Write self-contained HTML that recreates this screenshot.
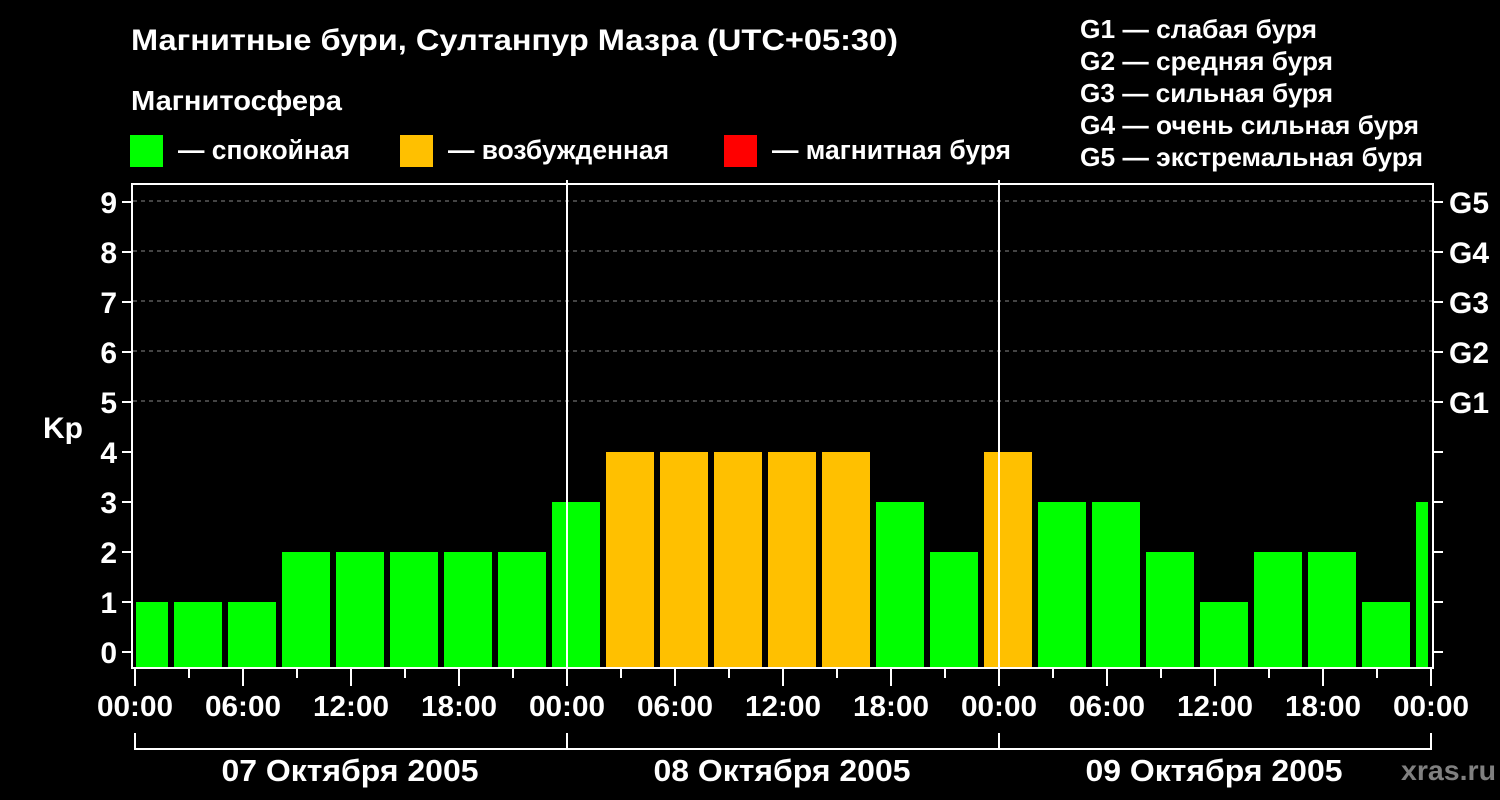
<!DOCTYPE html>
<html><head><meta charset="utf-8"><style>
html,body{margin:0;padding:0;background:#000;width:1500px;height:800px;overflow:hidden}
svg{display:block}
text{font-family:"Liberation Sans",Arial,sans-serif;font-weight:bold;fill:#fff}
</style></head><body>
<svg width="1500" height="800" viewBox="0 0 1500 800" xmlns="http://www.w3.org/2000/svg">
<rect width="1500" height="800" fill="#000"/>
<text x="131" y="50" font-size="30" textLength="767" lengthAdjust="spacingAndGlyphs">Магнитные бури, Султанпур Мазра (UTC+05:30)</text>
<text x="131" y="110" font-size="28" textLength="211" lengthAdjust="spacingAndGlyphs">Магнитосфера</text>
<rect x="130" y="135" width="33" height="32" fill="#00ff00"/>
<text x="178" y="159" font-size="27" textLength="172" lengthAdjust="spacingAndGlyphs">— спокойная</text>
<rect x="400" y="135" width="33" height="32" fill="#ffc000"/>
<text x="448" y="159" font-size="27" textLength="221" lengthAdjust="spacingAndGlyphs">— возбужденная</text>
<rect x="724" y="135" width="33" height="32" fill="#ff0000"/>
<text x="772" y="159" font-size="27" textLength="239" lengthAdjust="spacingAndGlyphs">— магнитная буря</text>
<g font-size="26">
<text x="1080" y="38" textLength="237" lengthAdjust="spacingAndGlyphs">G1 — слабая буря</text>
<text x="1080" y="70" textLength="253" lengthAdjust="spacingAndGlyphs">G2 — средняя буря</text>
<text x="1080" y="102" textLength="253" lengthAdjust="spacingAndGlyphs">G3 — сильная буря</text>
<text x="1080" y="134" textLength="339" lengthAdjust="spacingAndGlyphs">G4 — очень сильная буря</text>
<text x="1080" y="166" textLength="343" lengthAdjust="spacingAndGlyphs">G5 — экстремальная буря</text>
</g>
<g stroke="#888" stroke-width="1" stroke-dasharray="4 4">
<line x1="133" y1="201" x2="1432" y2="201"/>
<line x1="133" y1="251" x2="1432" y2="251"/>
<line x1="133" y1="301" x2="1432" y2="301"/>
<line x1="133" y1="351" x2="1432" y2="351"/>
<line x1="133" y1="401" x2="1432" y2="401"/>
</g>
<g stroke="#fff" stroke-width="2" fill="none">
<rect x="132" y="184" width="1301" height="484"/>
<path d="M135 733 V749 H1431 V733 M567 733 V749 M999 733 V749"/>
</g>
<g font-size="30" text-anchor="end">
<text x="117" y="663">0</text><text x="117" y="613">1</text><text x="117" y="563">2</text>
<text x="117" y="513">3</text><text x="117" y="463">4</text><text x="117" y="413">5</text>
<text x="117" y="363">6</text><text x="117" y="313">7</text><text x="117" y="263">8</text>
<text x="117" y="213">9</text>
</g>
<text x="43" y="438" font-size="30" textLength="40" lengthAdjust="spacingAndGlyphs">Kp</text>
<g font-size="30">
<text x="1449" y="413">G1</text><text x="1449" y="363">G2</text><text x="1449" y="313">G3</text>
<text x="1449" y="263">G4</text><text x="1449" y="213">G5</text>
</g>
<g font-size="29" text-anchor="middle">
<text x="135" y="716" textLength="76" lengthAdjust="spacingAndGlyphs">00:00</text><text x="243" y="716" textLength="76" lengthAdjust="spacingAndGlyphs">06:00</text><text x="351" y="716" textLength="76" lengthAdjust="spacingAndGlyphs">12:00</text><text x="459" y="716" textLength="76" lengthAdjust="spacingAndGlyphs">18:00</text>
<text x="567" y="716" textLength="76" lengthAdjust="spacingAndGlyphs">00:00</text><text x="675" y="716" textLength="76" lengthAdjust="spacingAndGlyphs">06:00</text><text x="783" y="716" textLength="76" lengthAdjust="spacingAndGlyphs">12:00</text><text x="891" y="716" textLength="76" lengthAdjust="spacingAndGlyphs">18:00</text>
<text x="999" y="716" textLength="76" lengthAdjust="spacingAndGlyphs">00:00</text><text x="1107" y="716" textLength="76" lengthAdjust="spacingAndGlyphs">06:00</text><text x="1215" y="716" textLength="76" lengthAdjust="spacingAndGlyphs">12:00</text><text x="1323" y="716" textLength="76" lengthAdjust="spacingAndGlyphs">18:00</text>
<text x="1431" y="716" textLength="76" lengthAdjust="spacingAndGlyphs">00:00</text>
<text x="350" y="781" font-size="31" textLength="257" lengthAdjust="spacingAndGlyphs">07 Октября 2005</text>
<text x="782" y="781" font-size="31" textLength="257" lengthAdjust="spacingAndGlyphs">08 Октября 2005</text>
<text x="1214" y="781" font-size="31" textLength="257" lengthAdjust="spacingAndGlyphs">09 Октября 2005</text>
</g>
<text x="1401" y="780" font-size="28" textLength="95" lengthAdjust="spacingAndGlyphs" style="fill:#808080">xras.ru</text>
<g>
<rect x="136" y="602" width="32" height="66" fill="#00ff00"/>
<rect x="174" y="602" width="48" height="66" fill="#00ff00"/>
<rect x="228" y="602" width="48" height="66" fill="#00ff00"/>
<rect x="282" y="552" width="48" height="116" fill="#00ff00"/>
<rect x="336" y="552" width="48" height="116" fill="#00ff00"/>
<rect x="390" y="552" width="48" height="116" fill="#00ff00"/>
<rect x="444" y="552" width="48" height="116" fill="#00ff00"/>
<rect x="498" y="552" width="48" height="116" fill="#00ff00"/>
<rect x="552" y="502" width="48" height="166" fill="#00ff00"/>
<rect x="606" y="452" width="48" height="216" fill="#ffc000"/>
<rect x="660" y="452" width="48" height="216" fill="#ffc000"/>
<rect x="714" y="452" width="48" height="216" fill="#ffc000"/>
<rect x="768" y="452" width="48" height="216" fill="#ffc000"/>
<rect x="822" y="452" width="48" height="216" fill="#ffc000"/>
<rect x="876" y="502" width="48" height="166" fill="#00ff00"/>
<rect x="930" y="552" width="48" height="116" fill="#00ff00"/>
<rect x="984" y="452" width="48" height="216" fill="#ffc000"/>
<rect x="1038" y="502" width="48" height="166" fill="#00ff00"/>
<rect x="1092" y="502" width="48" height="166" fill="#00ff00"/>
<rect x="1146" y="552" width="48" height="116" fill="#00ff00"/>
<rect x="1200" y="602" width="48" height="66" fill="#00ff00"/>
<rect x="1254" y="552" width="48" height="116" fill="#00ff00"/>
<rect x="1308" y="552" width="48" height="116" fill="#00ff00"/>
<rect x="1362" y="602" width="48" height="66" fill="#00ff00"/>
<rect x="1416" y="502" width="12" height="166" fill="#00ff00"/>
</g>
<g stroke="#fff" stroke-width="2">
<line x1="567" y1="180" x2="567" y2="668"/>
<line x1="999" y1="180" x2="999" y2="668"/>
<path d="M122 652H132M122 602H132M122 552H132M122 502H132M122 452H132M122 402H132M122 352H132M122 302H132M122 252H132M122 202H132
M1433 652H1443M1433 602H1443M1433 552H1443M1433 502H1443M1433 452H1443M1433 402H1443M1433 352H1443M1433 302H1443M1433 252H1443M1433 202H1443
M135 668V686M189 668V678M243 668V686M297 668V678M351 668V686M405 668V678M459 668V686M513 668V678
M567 668V686M621 668V678M675 668V686M729 668V678M783 668V686M837 668V678M891 668V686M945 668V678
M999 668V686M1053 668V678M1107 668V686M1161 668V678M1215 668V686M1269 668V678M1323 668V686M1377 668V678M1431 668V686"/>
<line x1="131" y1="668" x2="1434" y2="668"/>
</g>
</svg>
</body></html>
